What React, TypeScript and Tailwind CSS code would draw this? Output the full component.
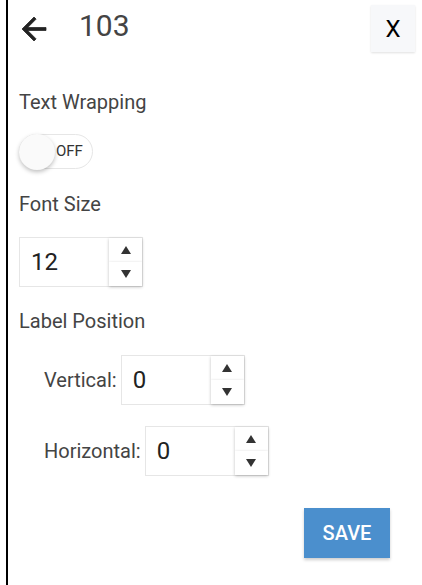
import React from 'react';

const ArrowBack = () => (
  <svg width="36" height="36" viewBox="0 0 24 24" className="shrink-0 ml-[-3px] mt-[6px]">
    <path
      d="M20 11H7.83l5.59-5.59L12 4l-8 8 8 8 1.41-1.41L7.83 13H20v-2z"
      fill="#222"
      stroke="#222"
      strokeWidth="0.5"
      strokeLinejoin="round"
    />
  </svg>
);

const Spinner = () => (
  <div className="flex flex-col w-[33px] h-full">
    <button className="flex-1 flex items-center justify-center bg-white shadow-[0_1px_3px_rgba(0,0,0,0.25)]">
      <svg width="10" height="8" viewBox="0 0 10 8">
        <path d="M5 0L10 8H0z" fill="#333" />
      </svg>
    </button>
    <button className="flex-1 flex items-center justify-center bg-white shadow-[0_1px_3px_rgba(0,0,0,0.25)]">
      <svg width="10" height="8" viewBox="0 0 10 8">
        <path d="M0 0H10L5 8z" fill="#333" />
      </svg>
    </button>
  </div>
);

const NumberInput = ({ value }: { value: string }) => (
  <div className="flex w-[124px] h-[50px] border border-[#e6e6e6] bg-white">
    <div className="flex-1 flex items-center pl-[11px] text-[24px] text-[#222]">{value}</div>
    <Spinner />
  </div>
);

const Label = ({ children, className = '' }: { children: React.ReactNode; className?: string }) => (
  <div className={`text-[20px] leading-[24px] text-[#444] ${className}`}>{children}</div>
);

export default function App() {
  return (
    <div className="w-[422px] h-[585px] bg-white flex font-['Roboto',sans-serif] overflow-hidden">
      <div className="w-[6px] shrink-0" />
      <div className="w-[2px] shrink-0 bg-black" />
      <div className="flex-1 flex flex-col pl-[11px]">
        {/* Header */}
        <div className="flex items-start pt-[5px]">
          <ArrowBack />
          <div className="ml-[27px] mt-[3px] text-[30px] leading-[36px] text-[#444]">103</div>
          <div className="flex-1" />
          <button className="w-[44px] h-[47px] mr-[7px] bg-[#f7f8fa] shadow-[0_1px_2px_rgba(0,0,0,0.12)] text-[24px] text-black flex items-center justify-center">
            X
          </button>
        </div>

        <Label className="mt-[38px]">Text Wrapping</Label>
        <div className="mt-[20px] relative w-[74px] h-[35px] rounded-full border border-[#e6e6e6] bg-white">
          <div className="absolute left-[-1px] top-[-1px] w-[36px] h-[36px] rounded-full bg-[#fafafa] shadow-[0_2px_4px_rgba(0,0,0,0.25)]" />
          <span className="absolute left-[36px] top-[7px] text-[15px] leading-[18px] text-[#333]">OFF</span>
        </div>

        <Label className="mt-[23px]">Font Size</Label>
        <div className="mt-[21px]">
          <NumberInput value="12" />
        </div>

        <Label className="mt-[22px]">Label Position</Label>
        <div className="mt-[22px] pl-[25px] flex items-center gap-[4px]">
          <Label>Vertical:</Label>
          <NumberInput value="0" />
        </div>
        <div className="mt-[21px] pl-[25px] flex items-center gap-[4px]">
          <Label>Horizontal:</Label>
          <NumberInput value="0" />
        </div>

        <div className="mt-[32px] flex justify-end pr-[32px]">
          <button className="w-[86px] h-[50px] bg-[#4b8fcd] text-white text-[20px] font-medium shadow-[0_2px_3px_rgba(0,0,0,0.2)]">
            SAVE
          </button>
        </div>
      </div>
    </div>
  );
}
